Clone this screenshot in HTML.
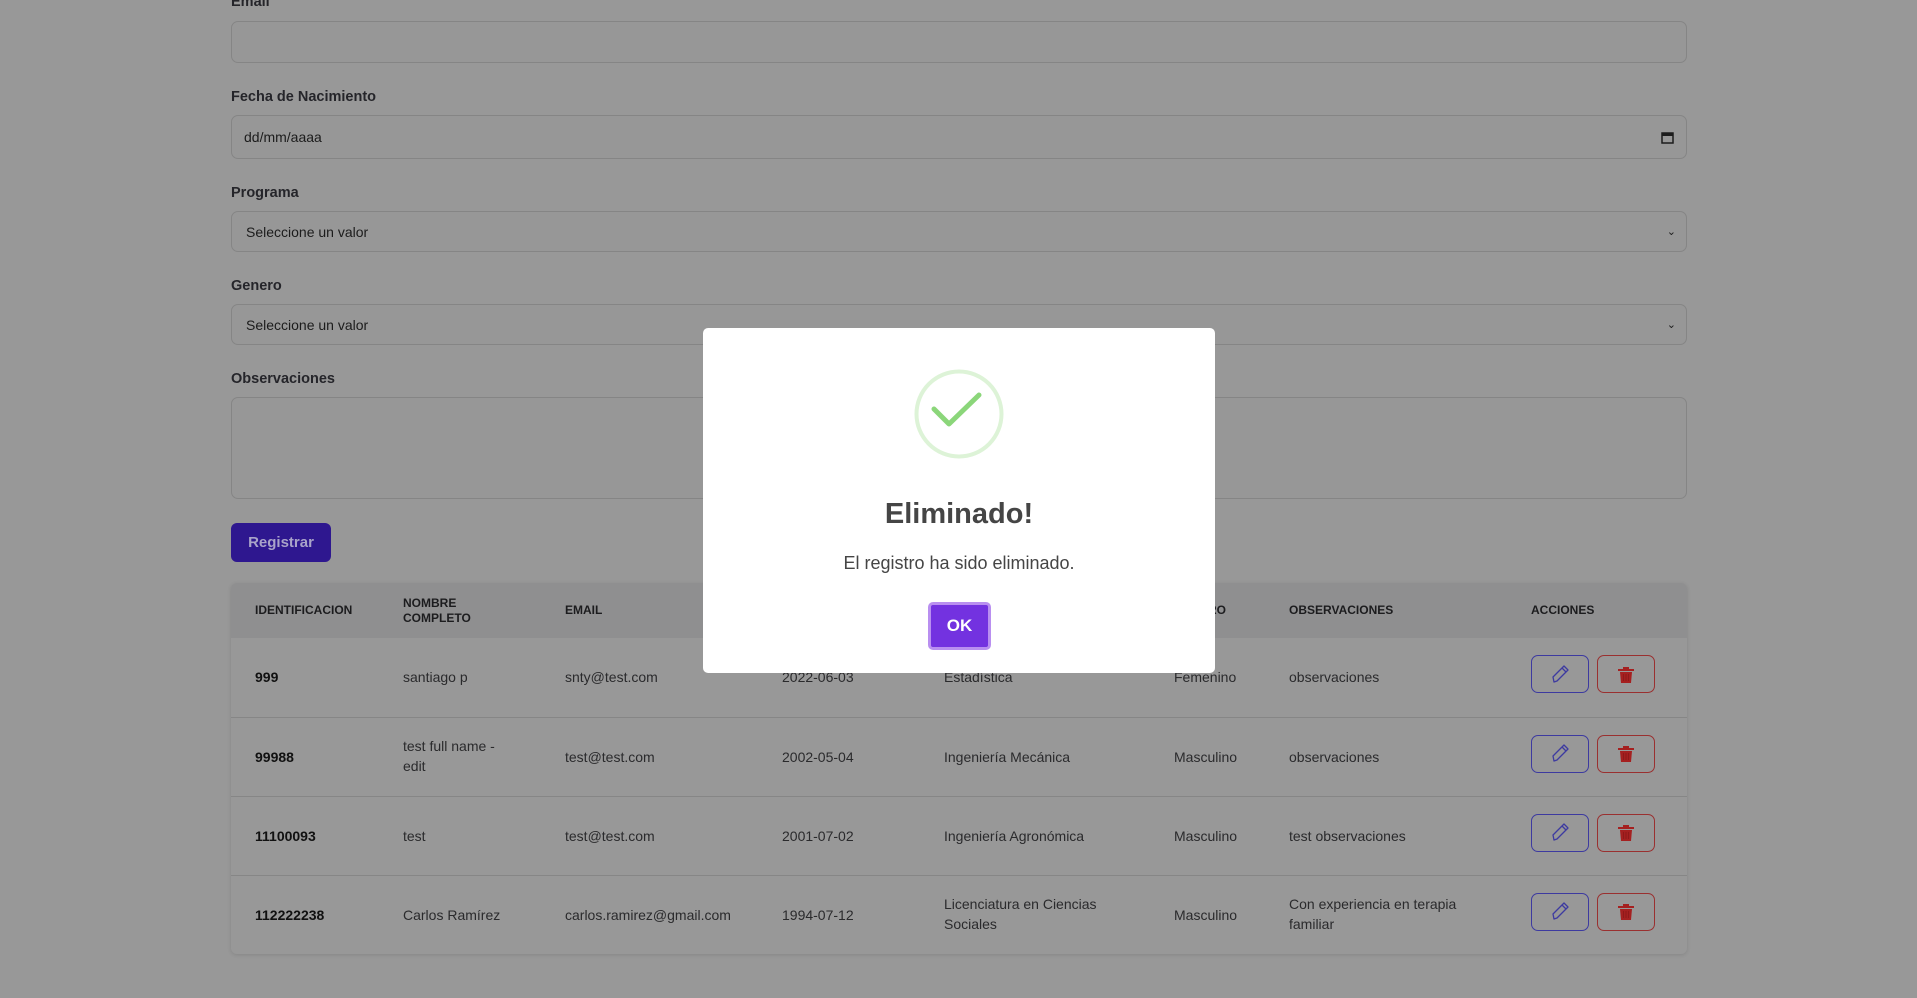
<!DOCTYPE html>
<html><head><meta charset="utf-8"><style>
*{box-sizing:border-box;margin:0;padding:0}
body{width:1917px;height:998px;overflow:hidden;background:#989898;font-family:"Liberation Sans",sans-serif;position:relative;color:#1c1c1e}
.lbl{position:absolute;left:231px;font-size:14.5px;font-weight:bold;color:#25252a}
.inp{position:absolute;left:231px;width:1456px;border:1px solid #858585;border-radius:7px;background:#979797;font-size:14px;color:#1c1c1c;padding-left:12px;display:flex;align-items:center}
.btn{position:absolute;left:231px;top:523px;width:100px;height:39px;background:#2e178f;border-radius:6px;color:#a9a3c9;font-weight:bold;font-size:15px;display:flex;align-items:center;justify-content:center}
.table{position:absolute;left:231px;top:583px;width:1456px;height:371px;border-radius:6px;overflow:hidden;box-shadow:0 1px 4px rgba(0,0,0,.12)}
.th{position:absolute;top:0;left:0;width:100%;height:55px;background:#8f8f90}
.h{position:absolute;font-size:12px;font-weight:bold;color:#1c1c1e;line-height:15px}
.row{position:absolute;left:0;width:100%;height:79px;border-top:1px solid #868686}
.c{position:absolute;font-size:14px;color:#2a2a2c;line-height:20px}
.eb,.db{position:absolute;width:58px;height:38px;border-radius:7px;top:17px}
.eb{left:1300px;border:1.5px solid #3d3aa0}
.db{left:1366px;border:1.5px solid #9a3030}
.modal{position:absolute;left:703px;top:328px;width:512px;height:345px;background:#fff;border-radius:5px;text-align:center}
</style></head><body>
<div class="lbl" style="top:-6px">Email</div>
<div class="inp" style="top:21px;height:42px"></div>
<div class="lbl" style="top:89px">Fecha de Nacimiento</div>
<div class="inp" style="top:115px;height:44px">dd/mm/aaaa<svg style="position:absolute;right:12px;top:15px" width="13" height="13" viewBox="0 0 13 13"><rect x="1" y="2" width="11" height="10" fill="none" stroke="#1c1c1c" stroke-width="1.5"/><rect x="1" y="2" width="11" height="3" fill="#1c1c1c"/></svg></div>
<div class="lbl" style="top:185px">Programa</div>
<div class="inp" style="top:211px;height:41px;padding-left:14px">Seleccione un valor<span style="position:absolute;right:10px;font-size:11px">&#8964;</span></div>
<div class="lbl" style="top:278px">Genero</div>
<div class="inp" style="top:304px;height:41px;padding-left:14px">Seleccione un valor<span style="position:absolute;right:10px;font-size:11px">&#8964;</span></div>
<div class="lbl" style="top:371px">Observaciones</div>
<div class="inp" style="top:397px;height:102px"></div>
<div class="btn">Registrar</div>
<div class="table">
<div class="th"></div>
<div class="h" style="left:24px;top:20px">IDENTIFICACION</div>
<div class="h" style="left:172px;top:13px">NOMBRE<br>COMPLETO</div>
<div class="h" style="left:334px;top:20px">EMAIL</div>
<div class="h" style="left:943px;top:20px">GENERO</div>
<div class="h" style="left:1058px;top:20px">OBSERVACIONES</div>
<div class="h" style="left:1300px;top:20px">ACCIONES</div>

<div class="row" style="top:55px;border-top:none">
<div class="c" style="left:24px;top:29px;font-weight:bold;color:#111">999</div>
<div class="c" style="left:172px;top:29px">santiago p</div>
<div class="c" style="left:334px;top:29px">snty@test.com</div>
<div class="c" style="left:551px;top:29px">2022-06-03</div>
<div class="c" style="left:713px;top:29px">Estadística</div>
<div class="c" style="left:943px;top:29px">Femenino</div>
<div class="c" style="left:1058px;top:29px">observaciones</div>
<div class="eb"></div><div class="db"></div></div>

<div class="row" style="top:134px">
<div class="c" style="left:24px;top:29px;font-weight:bold;color:#111">99988</div>
<div class="c" style="left:172px;top:18px">test full name -<br>edit</div>
<div class="c" style="left:334px;top:29px">test@test.com</div>
<div class="c" style="left:551px;top:29px">2002-05-04</div>
<div class="c" style="left:713px;top:29px">Ingeniería Mecánica</div>
<div class="c" style="left:943px;top:29px">Masculino</div>
<div class="c" style="left:1058px;top:29px">observaciones</div>
<div class="eb"></div><div class="db"></div></div>

<div class="row" style="top:213px">
<div class="c" style="left:24px;top:29px;font-weight:bold;color:#111">11100093</div>
<div class="c" style="left:172px;top:29px">test</div>
<div class="c" style="left:334px;top:29px">test@test.com</div>
<div class="c" style="left:551px;top:29px">2001-07-02</div>
<div class="c" style="left:713px;top:29px">Ingeniería Agronómica</div>
<div class="c" style="left:943px;top:29px">Masculino</div>
<div class="c" style="left:1058px;top:29px">test observaciones</div>
<div class="eb"></div><div class="db"></div></div>

<div class="row" style="top:292px">
<div class="c" style="left:24px;top:29px;font-weight:bold;color:#111">112222238</div>
<div class="c" style="left:172px;top:29px">Carlos Ramírez</div>
<div class="c" style="left:334px;top:29px">carlos.ramirez@gmail.com</div>
<div class="c" style="left:551px;top:29px">1994-07-12</div>
<div class="c" style="left:713px;top:18px">Licenciatura en Ciencias<br>Sociales</div>
<div class="c" style="left:943px;top:29px">Masculino</div>
<div class="c" style="left:1058px;top:18px">Con experiencia en terapia<br>familiar</div>
<div class="eb"></div><div class="db"></div></div>
</div>
<svg style="position:absolute;left:0;top:0" width="1917" height="998">
<defs>
<g id="pen" fill="none" stroke="#3d3aa0" stroke-width="1.3" stroke-linecap="round" stroke-linejoin="round"><path d="M-6 8 L-7 3 L4 -8 L8 -4 L-3 7 Z M2 -6 L6 -2"/></g>
<g id="bin" fill="#a52020"><rect x="-8" y="-6" width="16" height="2"/><rect x="-3" y="-8" width="6" height="2"/><path d="M-6 -3 H6 L5 8 H-5 Z"/><g stroke="#8a1818" stroke-width="0.8"><path d="M-2.5 -1 V6 M0 -1 V6 M2.5 -1 V6"/></g></g>
</defs>
<use href="#pen" x="1560" y="674"/><use href="#pen" x="1560" y="753"/><use href="#pen" x="1560" y="832"/><use href="#pen" x="1560" y="911"/>
<use href="#bin" x="1626" y="675"/><use href="#bin" x="1626" y="754"/><use href="#bin" x="1626" y="833"/><use href="#bin" x="1626" y="912"/>
</svg>
<div class="modal">
<svg style="position:absolute;left:210px;top:40px" width="92" height="92" viewBox="0 0 92 92"><circle cx="46" cy="46" r="42.5" fill="none" stroke="#ddf3d7" stroke-width="4"/><path d="M21 41 L36 56 L66 27" fill="none" stroke="#8bd67a" stroke-width="5" stroke-linecap="round" stroke-linejoin="round"/></svg>
<div style="position:absolute;top:170px;width:100%;font-size:29px;font-weight:bold;color:#454545">Eliminado!</div>
<div style="position:absolute;top:225px;width:100%;font-size:18px;color:#454545">El registro ha sido eliminado.</div>
<div style="position:absolute;left:225px;top:274px;width:63px;height:48px;border-radius:5px;border:3px solid #b98ff0;background:#7332e0;color:#fff;font-weight:bold;font-size:17px;display:flex;align-items:center;justify-content:center">OK</div>
</div>
</body></html>
